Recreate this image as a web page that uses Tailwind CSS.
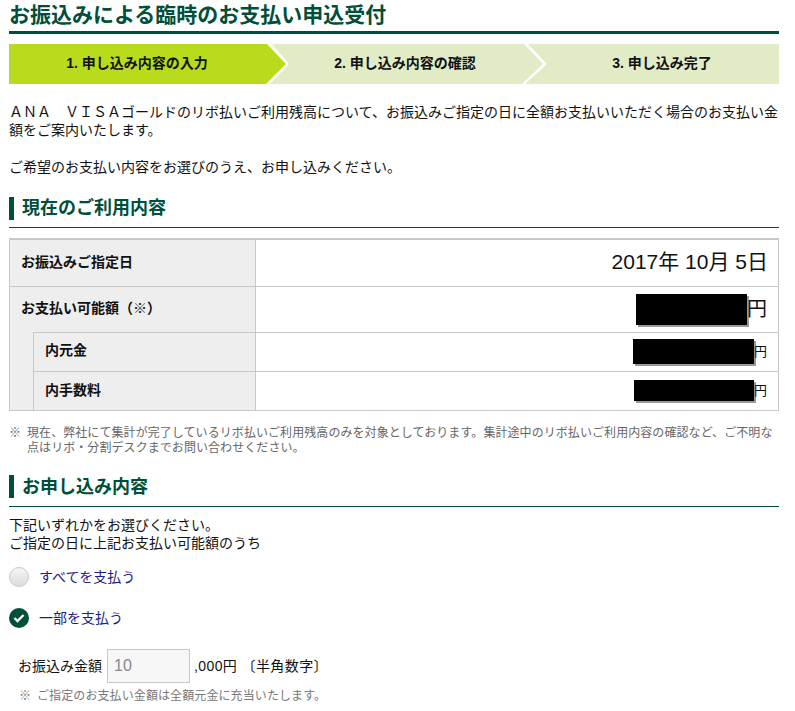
<!DOCTYPE html>
<html lang="ja">

<head>
  <meta charset="UTF-8">
  <title>お振込みによる臨時のお支払い申込受付</title>
  <script src="https://cdn.jsdelivr.net/npm/@tailwindcss/browser@4"></script>
</head>

<body class="bg-white font-['Liberation_Sans','Noto_Sans_CJK_JP',sans-serif] text-[14px] leading-[18px] text-[#111] overflow-hidden">
  <div class="w-[770px] ml-[9px] h-[711px] overflow-hidden">

    <!-- Title -->
    <h1 class="h-[34px] pt-[1px] text-[21px] leading-[28px] font-bold text-[#004f3a] border-b-[3px] border-[#004f3a]">お振込みによる臨時のお支払い申込受付</h1>

    <!-- Steps -->
    <div class="flex mt-[10px] h-[40px] text-[14px] font-bold">
      <div class="w-[277px] pr-[21px] pb-[2px] flex items-center justify-center bg-[#b8dc1c] [clip-path:polygon(0_0,258px_0,277px_50%,257px_100%,0_100%)]">1. 申し込み内容の入力</div>
      <div class="w-[273px] -ml-[16px] pr-[3px] pb-[2px] flex items-center justify-center bg-[#e1ebc5] [clip-path:polygon(2px_0,254px_0,273px_50%,252px_100%,0_100%,19px_50%)]">2. 申し込み内容の確認</div>
      <div class="w-[254px] -ml-[18px] pl-[20px] pb-[2px] flex items-center justify-center bg-[#e1ebc5] [clip-path:polygon(3px_0,100%_0,100%_100%,0_100%,22px_50%)]">3. 申し込み完了</div>
    </div>

    <!-- Intro -->
    <p class="mt-[19px]">ＡＮＡ　ＶＩＳＡゴールドのリボ払いご利用残高について、お振込みご指定の日に全額お支払いいただく場合のお支払い金額をご案内いたします。</p>
    <p class="mt-[19px]">ご希望のお支払い内容をお選びのうえ、お申し込みください。</p>

    <!-- Current usage -->
    <div class="mt-[21px] pb-[7px] border-b border-[#004f3a]">
      <h2 class="pl-[8px] h-[23px] border-l-[5px] border-[#004f3a] text-[18px] leading-[23px] font-bold text-[#004f3a]">現在のご利用内容</h2>
    </div>

    <table class="mt-[10px] w-full table-fixed border-collapse border-t-2 border-[#c8c8c8] text-left">
      <colgroup>
        <col class="w-[24px]">
        <col class="w-[222px]">
        <col>
      </colgroup>
      <tbody>
        <tr class="h-[47px]">
          <th colspan="2" class="pl-[11px] pb-[2px] bg-[#eee] border border-t-0 border-[#c8c8c8] font-bold">お振込みご指定日</th>
          <td class="pr-[10px] pb-[2px] text-right text-[21px] border border-t-0 border-[#c8c8c8]">2017年 10月 5日</td>
        </tr>
        <tr class="h-[46px]">
          <th colspan="2" class="pl-[11px] pb-[2px] bg-[#eee] border border-b-0 border-[#c8c8c8] font-bold">お支払い可能額（※）</th>
          <td class="pr-[11px] border border-[#c8c8c8]">
            <div class="flex justify-end items-center">
              <span class="w-[111px] h-[31px] bg-black shadow-[2px_2px_0_#999]"></span>
              <span class="text-[20px]">円</span>
            </div>
          </td>
        </tr>
        <tr class="h-[39px]">
          <td rowspan="2" class="bg-[#eee] border-l border-b border-[#c8c8c8]"></td>
          <th class="pl-[11px] pb-[4px] bg-[#eee] border border-[#c8c8c8] font-bold">内元金</th>
          <td class="pr-[11px] border border-[#c8c8c8]">
            <div class="flex justify-end items-center">
              <span class="w-[121px] h-[25px] bg-black shadow-[2px_2px_0_#999]"></span>
              <span class="text-[13px]">円</span>
            </div>
          </td>
        </tr>
        <tr class="h-[39px]">
          <th class="pl-[11px] pb-[2px] bg-[#eee] border border-[#c8c8c8] font-bold">内手数料</th>
          <td class="pr-[11px] border border-[#c8c8c8]">
            <div class="flex justify-end items-center">
              <span class="w-[120px] h-[21px] bg-black shadow-[2px_2px_0_#999]"></span>
              <span class="text-[13px]">円</span>
            </div>
          </td>
        </tr>
      </tbody>
    </table>

    <!-- Note -->
    <div class="flex mt-[15px] text-[12px] leading-[15px] tracking-[0.07px] text-[#666]">
      <span class="w-[18px] shrink-0">※</span>
      <p>現在、弊社にて集計が完了しているリボ払いご利用残高のみを対象としております。集計途中のリボ払いご利用内容の確認など、ご不明な点はリボ・分割デスクまでお問い合わせください。</p>
    </div>

    <!-- Application -->
    <div class="mt-[19px] pb-[8px] border-b border-[#004f3a]">
      <h2 class="pl-[8px] h-[23px] border-l-[5px] border-[#004f3a] text-[18px] leading-[25px] font-bold text-[#004f3a]">お申し込み内容</h2>
    </div>

    <p class="mt-[9px]">下記いずれかをお選びください。<br>ご指定の日に上記お支払い可能額のうち</p>

    <!-- Radios -->
    <div class="mt-[15px] flex items-center gap-[10px] h-[20px] text-[#1c1c8a]">
      <span class="w-[20px] h-[20px] rounded-full border border-[#c8c8c8] bg-gradient-to-b from-[#f6f6f6] to-[#dcdcdc]"></span>
      すべてを支払う
    </div>
    <div class="mt-[21px] flex items-center gap-[10px] h-[20px] text-[#1c1c8a]">
      <span class="w-[20px] h-[20px] rounded-full bg-[#004f3a] flex items-center justify-center">
        <svg width="12" height="10" viewBox="0 0 12 10" fill="none" stroke="#fff" stroke-width="2.4"><path d="M1.5 5l3 3 6-6"/></svg>
      </span>
      一部を支払う
    </div>

    <!-- Amount -->
    <div class="mt-[21px] ml-[9px] flex items-center h-[34px]">
      <span>お振込み金額</span>
      <input type="text" value="10" disabled class="ml-[5px] w-[83px] h-[34px] px-[6px] bg-[#f7f7f7] border border-[#c8c8c8] text-[16px] text-[#888]">
      <span class="ml-[4px] tracking-[0.4px]">,000円 〔半角数字〕</span>
    </div>
    <div class="flex mt-[5px] ml-[10px] text-[12px] leading-[16px] tracking-[0.1px] text-[#777]">
      <span class="w-[18px] shrink-0">※</span>
      <p>ご指定のお支払い金額は全額元金に充当いたします。</p>
    </div>

  </div>
</body>

</html>
